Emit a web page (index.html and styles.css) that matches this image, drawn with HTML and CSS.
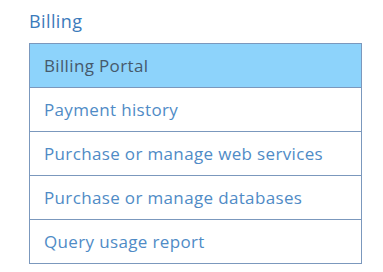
FILE: index.html
```html
<!DOCTYPE html>
<html lang="en">
<head>
    <meta charset="UTF-8">
    <title>Billing</title>
    <link rel="stylesheet" href="styles.css">
</head>
<body>
    <div class="section">
        <h2 class="section-title">Billing</h2>
        <ul class="menu-list">
            <li class="menu-item active">Billing Portal</li>
            <li class="menu-item">Payment history</li>
            <li class="menu-item">Purchase or manage web services</li>
            <li class="menu-item">Purchase or manage databases</li>
            <li class="menu-item">Query usage report</li>
        </ul>
    </div>
</body>
</html>
```

FILE: styles.css
```css
:root {
    --link-color: #4f8bc6;
    --title-color: #3b7bbb;
    --border-color: #7b98bd;
    --active-bg: #8dd3fb;
    --active-text: #46596b;
}

* {
    margin: 0;
    padding: 0;
    box-sizing: border-box;
}

body {
    background: #ffffff;
    font-family: 'Open Sans', sans-serif;
}

.section {
    padding: 9px 0 0 29px;
    width: 362px;
}

.section-title {
    color: var(--title-color);
    font-size: 18px;
    font-weight: 500;
    letter-spacing: 0.4px;
    line-height: 24px;
    margin-bottom: 10px;
}

.menu-list {
    list-style: none;
    border: 1px solid var(--border-color);
    border-bottom: none;
}

.menu-item {
    height: 44px;
    display: flex;
    align-items: center;
    padding-left: 14px;
    padding-bottom: 1px;
    border-bottom: 1px solid var(--border-color);
    color: var(--link-color);
    font-size: 17px;
    letter-spacing: 0.35px;
}

.menu-item.active {
    background: var(--active-bg);
    color: var(--active-text);
}
```
